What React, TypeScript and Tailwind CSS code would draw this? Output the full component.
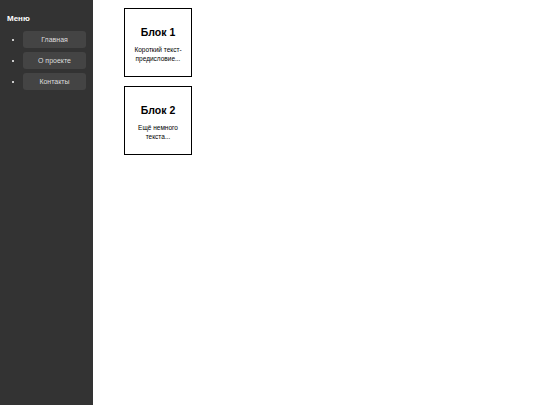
export default function App() {
  const items = ["Главная", "О проекте", "Контакты"];
  const blocks = [
    { title: "Блок 1", text: "Короткий текст-предисловие..." },
    { title: "Блок 2", text: "Ещё немного текста..." },
  ];
  return (
    <div className="flex min-h-[405px] w-[540px] bg-white font-['Liberation_Sans',Arial,sans-serif]">
      <aside className="w-[93px] shrink-0 bg-[#333333] px-[7px] pt-[14px] text-white">
        <h3 className="text-[8px] leading-[10px] font-bold">Меню</h3>
        <ul className="mt-[7px] flex list-disc flex-col gap-[4px] pl-[16px] text-[7px] marker:text-white">
          {items.map((it) => (
            <li key={it}>
              <a className="block h-[17px] w-[63px] rounded-[3px] bg-[#444444] text-center leading-[17px] text-[#dddddd]">
                {it}
              </a>
            </li>
          ))}
        </ul>
      </aside>
      <main className="flex flex-col gap-[9px] pt-[8px] pl-[31px]">
        {blocks.map((b) => (
          <div
            key={b.title}
            className="flex h-[69px] w-[68px] flex-col items-center border border-black px-[4px] pt-[17px] text-center text-black"
          >
            <div className="text-[10.5px] leading-[13px] font-bold">{b.title}</div>
            <p className="mt-[6px] text-[6.5px] leading-[9px]">{b.text}</p>
          </div>
        ))}
      </main>
    </div>
  );
}
